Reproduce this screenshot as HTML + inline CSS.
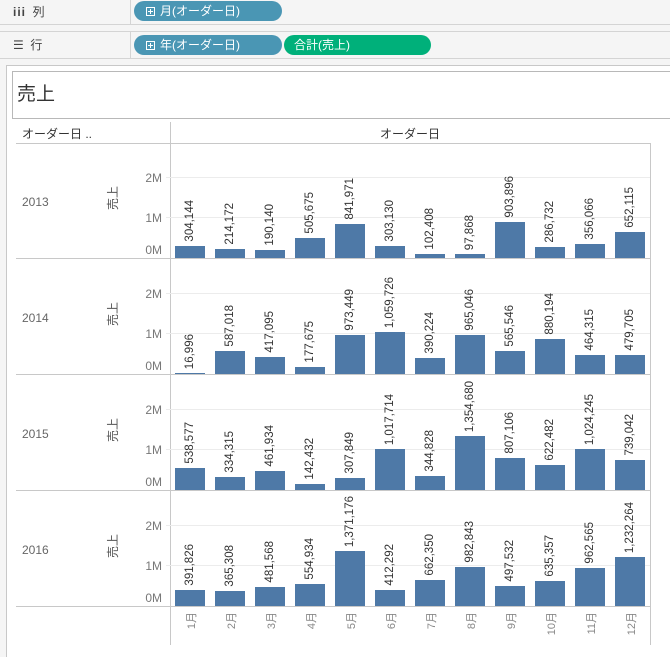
<!DOCTYPE html>
<html><head><meta charset="utf-8"><style>
*{margin:0;padding:0;box-sizing:border-box}
body{width:670px;height:657px;overflow:hidden;background:#f5f5f5;font-family:"Liberation Sans","Noto Sans CJK JP",sans-serif;position:relative;color:#333}
.abs{position:absolute}
.shelf{position:absolute;left:0;width:670px;background:#f5f5f5;border-top:1px solid #d4d4d4;border-bottom:1px solid #d4d4d4}
.pill{position:absolute;height:20px;border-radius:10px;color:#fff;font-size:12px;line-height:20px;padding-left:12px}
.blue{background:#4a96b4}.green{background:#00b07a}
.box{display:inline-block;width:9px;height:9px;border:1px solid #fff;margin-right:5px;vertical-align:-1px;position:relative}
.box:before{content:"";position:absolute;left:1px;top:3px;width:5px;height:1px;background:#fff}
.box:after{content:"";position:absolute;left:3px;top:1px;width:1px;height:5px;background:#fff}
.pane{position:absolute;left:170px;width:480px;height:116px;border-bottom:1px solid #c8c8c8}
.grid{position:absolute;left:-4px;width:484px;height:1px;background:#ececec}
.bar{position:absolute;bottom:0;width:30px;background:#4e79a7}
.lbl{position:absolute;writing-mode:vertical-rl;text-orientation:sideways;transform:rotate(180deg);font-size:11.5px;color:#333;line-height:14px;width:14px}
.ax{position:absolute;width:40px;text-align:right;left:122px;font-size:12px;color:#777}
.yr{position:absolute;left:22px;font-size:12px;color:#666}
.vs{position:absolute;left:104px;writing-mode:vertical-rl;text-orientation:sideways;transform:rotate(180deg);font-size:12px;color:#555}
.hl{position:absolute;left:16px;width:154px;height:1px;background:#c8c8c8}
.mo{position:absolute;top:612px;writing-mode:vertical-rl;text-orientation:sideways;transform:rotate(180deg);font-size:11px;color:#888;width:14px}
</style></head><body>
<div class="shelf" style="top:-1px;height:26px"></div>
<div class="abs" style="left:130px;top:0;width:1px;height:24px;background:#d4d4d4"></div>
<div class="abs" style="left:13px;top:3px;font-size:12px;color:#444"><b style="letter-spacing:1px">iii</b>&nbsp; 列</div>
<div class="pill blue" style="left:134px;top:1px;width:148px"><span class="box"></span>月(オーダー日)</div>
<div class="shelf" style="top:31px;height:28px"></div>
<div class="abs" style="left:130px;top:32px;width:1px;height:26px;background:#d4d4d4"></div>
<div class="abs" style="left:13px;top:36px;font-size:12px;color:#444">☰&nbsp; 行</div>
<div class="pill blue" style="left:134px;top:35px;width:148px"><span class="box"></span>年(オーダー日)</div>
<div class="pill green" style="left:284px;top:35px;width:147px;padding-left:10px">合計(売上)</div>

<div class="abs" style="left:6px;top:65px;width:664px;height:592px;background:#fff;border-left:1px solid #c8c8c8;border-top:1px solid #c8c8c8"></div>
<div class="abs" style="left:12px;top:71px;width:660px;height:48px;border:1px solid #b8b8b8;background:#fff"></div>
<div class="abs" style="left:17px;top:79px;font-size:19px;color:#333">売上</div>
<div class="abs" style="left:22px;top:125px;font-size:12px;color:#333">オーダー日 ..</div>
<div class="abs" style="left:380px;top:125px;font-size:12px;color:#333">オーダー日</div>
<div class="abs" style="left:16px;top:143px;width:634px;height:1px;background:#c8c8c8"></div>
<div class="abs" style="left:170px;top:122px;width:1px;height:523px;background:#c8c8c8"></div>
<div class="abs" style="left:650px;top:143px;width:1px;height:502px;background:#c8c8c8"></div>

<!-- 2013 -->
<div class="hl" style="top:258px"></div>
<div class="yr" style="top:195px">2013</div><div class="vs" style="top:186px">売上</div>
<div class="ax" style="top:171px">2M</div><div class="ax" style="top:211px">1M</div><div class="ax" style="top:243px">0M</div>
<div class="pane" style="top:143px">
<div class="grid" style="bottom:80px"></div><div class="grid" style="bottom:40px"></div>
<div class="bar" style="left:5px;height:12px"></div><div class="lbl" style="left:13px;bottom:16px">304,144</div>
<div class="bar" style="left:45px;height:9px"></div><div class="lbl" style="left:53px;bottom:13px">214,172</div>
<div class="bar" style="left:85px;height:8px"></div><div class="lbl" style="left:93px;bottom:12px">190,140</div>
<div class="bar" style="left:125px;height:20px"></div><div class="lbl" style="left:133px;bottom:24px">505,675</div>
<div class="bar" style="left:165px;height:34px"></div><div class="lbl" style="left:173px;bottom:38px">841,971</div>
<div class="bar" style="left:205px;height:12px"></div><div class="lbl" style="left:213px;bottom:16px">303,130</div>
<div class="bar" style="left:245px;height:4px"></div><div class="lbl" style="left:253px;bottom:8px">102,408</div>
<div class="bar" style="left:285px;height:4px"></div><div class="lbl" style="left:293px;bottom:8px">97,868</div>
<div class="bar" style="left:325px;height:36px"></div><div class="lbl" style="left:333px;bottom:40px">903,896</div>
<div class="bar" style="left:365px;height:11px"></div><div class="lbl" style="left:373px;bottom:15px">286,732</div>
<div class="bar" style="left:405px;height:14px"></div><div class="lbl" style="left:413px;bottom:18px">356,066</div>
<div class="bar" style="left:445px;height:26px"></div><div class="lbl" style="left:453px;bottom:30px">652,115</div>
</div>

<!-- 2014 -->
<div class="hl" style="top:374px"></div>
<div class="yr" style="top:311px">2014</div><div class="vs" style="top:302px">売上</div>
<div class="ax" style="top:287px">2M</div><div class="ax" style="top:327px">1M</div><div class="ax" style="top:359px">0M</div>
<div class="pane" style="top:259px">
<div class="grid" style="bottom:80px"></div><div class="grid" style="bottom:40px"></div>
<div class="bar" style="left:5px;height:1px"></div><div class="lbl" style="left:13px;bottom:5px">16,996</div>
<div class="bar" style="left:45px;height:23px"></div><div class="lbl" style="left:53px;bottom:27px">587,018</div>
<div class="bar" style="left:85px;height:17px"></div><div class="lbl" style="left:93px;bottom:21px">417,095</div>
<div class="bar" style="left:125px;height:7px"></div><div class="lbl" style="left:133px;bottom:11px">177,675</div>
<div class="bar" style="left:165px;height:39px"></div><div class="lbl" style="left:173px;bottom:43px">973,449</div>
<div class="bar" style="left:205px;height:42px"></div><div class="lbl" style="left:213px;bottom:46px">1,059,726</div>
<div class="bar" style="left:245px;height:16px"></div><div class="lbl" style="left:253px;bottom:20px">390,224</div>
<div class="bar" style="left:285px;height:39px"></div><div class="lbl" style="left:293px;bottom:43px">965,046</div>
<div class="bar" style="left:325px;height:23px"></div><div class="lbl" style="left:333px;bottom:27px">565,546</div>
<div class="bar" style="left:365px;height:35px"></div><div class="lbl" style="left:373px;bottom:39px">880,194</div>
<div class="bar" style="left:405px;height:19px"></div><div class="lbl" style="left:413px;bottom:23px">464,315</div>
<div class="bar" style="left:445px;height:19px"></div><div class="lbl" style="left:453px;bottom:23px">479,705</div>
</div>

<!-- 2015 -->
<div class="hl" style="top:490px"></div>
<div class="yr" style="top:427px">2015</div><div class="vs" style="top:418px">売上</div>
<div class="ax" style="top:403px">2M</div><div class="ax" style="top:443px">1M</div><div class="ax" style="top:475px">0M</div>
<div class="pane" style="top:375px">
<div class="grid" style="bottom:80px"></div><div class="grid" style="bottom:40px"></div>
<div class="bar" style="left:5px;height:22px"></div><div class="lbl" style="left:13px;bottom:26px">538,577</div>
<div class="bar" style="left:45px;height:13px"></div><div class="lbl" style="left:53px;bottom:17px">334,315</div>
<div class="bar" style="left:85px;height:19px"></div><div class="lbl" style="left:93px;bottom:23px">461,934</div>
<div class="bar" style="left:125px;height:6px"></div><div class="lbl" style="left:133px;bottom:10px">142,432</div>
<div class="bar" style="left:165px;height:12px"></div><div class="lbl" style="left:173px;bottom:16px">307,849</div>
<div class="bar" style="left:205px;height:41px"></div><div class="lbl" style="left:213px;bottom:45px">1,017,714</div>
<div class="bar" style="left:245px;height:14px"></div><div class="lbl" style="left:253px;bottom:18px">344,828</div>
<div class="bar" style="left:285px;height:54px"></div><div class="lbl" style="left:293px;bottom:58px">1,354,680</div>
<div class="bar" style="left:325px;height:32px"></div><div class="lbl" style="left:333px;bottom:36px">807,106</div>
<div class="bar" style="left:365px;height:25px"></div><div class="lbl" style="left:373px;bottom:29px">622,482</div>
<div class="bar" style="left:405px;height:41px"></div><div class="lbl" style="left:413px;bottom:45px">1,024,245</div>
<div class="bar" style="left:445px;height:30px"></div><div class="lbl" style="left:453px;bottom:34px">739,042</div>
</div>

<!-- 2016 -->
<div class="hl" style="top:606px"></div>
<div class="yr" style="top:543px">2016</div><div class="vs" style="top:534px">売上</div>
<div class="ax" style="top:519px">2M</div><div class="ax" style="top:559px">1M</div><div class="ax" style="top:591px">0M</div>
<div class="pane" style="top:491px">
<div class="grid" style="bottom:80px"></div><div class="grid" style="bottom:40px"></div>
<div class="bar" style="left:5px;height:16px"></div><div class="lbl" style="left:13px;bottom:20px">391,826</div>
<div class="bar" style="left:45px;height:15px"></div><div class="lbl" style="left:53px;bottom:19px">365,308</div>
<div class="bar" style="left:85px;height:19px"></div><div class="lbl" style="left:93px;bottom:23px">481,568</div>
<div class="bar" style="left:125px;height:22px"></div><div class="lbl" style="left:133px;bottom:26px">554,934</div>
<div class="bar" style="left:165px;height:55px"></div><div class="lbl" style="left:173px;bottom:59px">1,371,176</div>
<div class="bar" style="left:205px;height:16px"></div><div class="lbl" style="left:213px;bottom:20px">412,292</div>
<div class="bar" style="left:245px;height:26px"></div><div class="lbl" style="left:253px;bottom:30px">662,350</div>
<div class="bar" style="left:285px;height:39px"></div><div class="lbl" style="left:293px;bottom:43px">982,843</div>
<div class="bar" style="left:325px;height:20px"></div><div class="lbl" style="left:333px;bottom:24px">497,532</div>
<div class="bar" style="left:365px;height:25px"></div><div class="lbl" style="left:373px;bottom:29px">635,357</div>
<div class="bar" style="left:405px;height:38px"></div><div class="lbl" style="left:413px;bottom:42px">962,565</div>
<div class="bar" style="left:445px;height:49px"></div><div class="lbl" style="left:453px;bottom:53px">1,232,264</div>
</div>

<div class="mo" style="left:183px">1月</div>
<div class="mo" style="left:223px">2月</div>
<div class="mo" style="left:263px">3月</div>
<div class="mo" style="left:303px">4月</div>
<div class="mo" style="left:343px">5月</div>
<div class="mo" style="left:383px">6月</div>
<div class="mo" style="left:423px">7月</div>
<div class="mo" style="left:463px">8月</div>
<div class="mo" style="left:503px">9月</div>
<div class="mo" style="left:543px">10月</div>
<div class="mo" style="left:583px">11月</div>
<div class="mo" style="left:623px">12月</div>
</body></html>
